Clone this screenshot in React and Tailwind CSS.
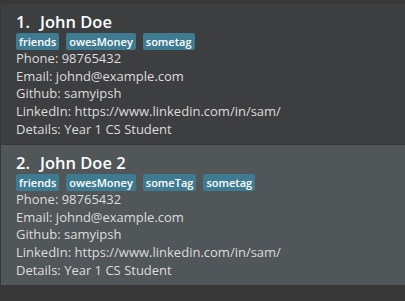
import React from 'react';

const PERSONS = [
  {
    id: 1,
    name: 'John Doe',
    tags: ['friends', 'owesMoney', 'sometag'],
    phone: '98765432',
    email: 'johnd@example.com',
    github: 'samyipsh',
    linkedin: 'https://www.linkedin.com/in/sam/',
    details: 'Year 1 CS Student',
  },
  {
    id: 2,
    name: 'John Doe 2',
    tags: ['friends', 'owesMoney', 'someTag', 'sometag'],
    phone: '98765432',
    email: 'johnd@example.com',
    github: 'samyipsh',
    linkedin: 'https://www.linkedin.com/in/sam/',
    details: 'Year 1 CS Student',
  },
];

function PersonCard({ person, selected }) {
  return (
    <div className={`h-[140px] pl-[15px] pt-[8px] ${selected ? 'bg-[#515658]' : 'bg-[#3c3e3f]'}`}>
      <div className="flex items-baseline text-[16.5px] font-semibold leading-[20px] text-white">
        <span className="mr-[10px]">{person.id}.</span>
        <span>{person.name}</span>
      </div>
      <div className="mt-px flex gap-[7px]">
        {person.tags.map((tag, i) => (
          <span
            key={i}
            className="rounded-[2px] bg-[#3e7b91] px-[3px] text-[11px] font-semibold leading-[17px] text-white"
          >
            {tag}
          </span>
        ))}
      </div>
      <div className="text-[13px] leading-[17.7px] text-[#dddddd]">
        <div>Phone: {person.phone}</div>
        <div>Email: {person.email}</div>
        <div>Github: {person.github}</div>
        <div>LinkedIn: {person.linkedin}</div>
        <div>Details: {person.details}</div>
      </div>
    </div>
  );
}

export default function App() {
  return (
    <div className="h-[301px] w-[405px] overflow-hidden bg-[#383838] pl-px pt-1 font-['Open_Sans',sans-serif]">
      <div className="flex flex-col gap-px">
        {PERSONS.map((p) => (
          <PersonCard key={p.id} person={p} selected={p.id === 2} />
        ))}
      </div>
    </div>
  );
}
